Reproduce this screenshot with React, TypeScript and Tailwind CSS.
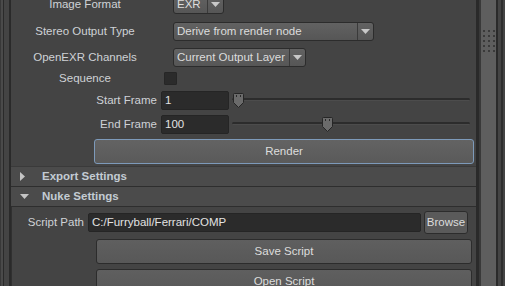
const font = { fontFamily: '"Liberation Sans", Arial, sans-serif' };

function Arrow() {
  return (
    <svg width="9" height="5" viewBox="0 0 9 5" className="block">
      <path d="M0 0 L9 0 L4.5 5 Z" fill="#c8c8c8" />
    </svg>
  );
}

function Dropdown({ value, width }: { value: string; width: string }) {
  return (
    <div
      className={`${width} h-[19px] flex items-stretch rounded-[3px] border border-[#2c2c2c] bg-gradient-to-b from-[#626262] to-[#565656] text-[#dcdcdc]`}
    >
      <div className="flex-1 flex items-center pl-[3px] text-[11.5px] whitespace-nowrap overflow-hidden">{value}</div>
      <div className="w-[16px] border-l border-[#3a3a3a] flex items-center justify-center">
        <Arrow />
      </div>
    </div>
  );
}

function Thumb({ left }: { left: number }) {
  return (
    <svg
      width="11"
      height="15"
      viewBox="0 0 11 15"
      className="absolute top-[-1px]"
      style={{ left }}
    >
      <path d="M1.5 0.5 H9.5 Q10.5 0.5 10.5 1.5 V9.5 L5.5 14.5 L0.5 9.5 V1.5 Q0.5 0.5 1.5 0.5 Z" fill="#6b6b6b" stroke="#262626" />
      <rect x="3" y="2" width="1" height="2" fill="#2a2a2a" />
      <rect x="7" y="2" width="1" height="2" fill="#2a2a2a" />
    </svg>
  );
}

function FrameRow({ label, value, thumb }: { label: string; value: string; thumb: number }) {
  return (
    <div className="flex items-center h-[19px] shrink-0">
      <div className="w-[146px] text-right text-[11.5px] text-[#cfd2d6]">{label}</div>
      <div className="ml-[4px] w-[68px] h-[19px] rounded-[2px] bg-[#2b2b2b] border border-[#252525] flex items-center pl-[3px] text-[11.5px] text-[#e2e2e2]">
        {value}
      </div>
      <div className="relative ml-[3px] w-[238px] h-[13px]">
        <div className="absolute left-0 right-0 top-[4px] h-[3px] rounded-full bg-[#2c2c2c] border-b border-[#4c4c4c]" />
        <Thumb left={thumb} />
      </div>
    </div>
  );
}

function Header({ title, open }: { title: string; open?: boolean }) {
  return (
    <div className="h-[20px] shrink-0 flex items-center bg-[#4b4b4b] border-b border-[#2e2e2e]">
      <div className="w-[31px] pl-[9px] flex items-center">
        {open ? (
          <svg width="9" height="5" viewBox="0 0 9 5"><path d="M0 0 L9 0 L4.5 5 Z" fill="#c4c4c4" /></svg>
        ) : (
          <svg width="5" height="9" viewBox="0 0 5 9"><path d="M0 0 L5 4.5 L0 9 Z" fill="#c4c4c4" /></svg>
        )}
      </div>
      <span className="text-[11.5px] font-bold text-[#c3cbd3]">{title}</span>
    </div>
  );
}

export default function App() {
  return (
    <div className="w-[505px] h-[286px] overflow-hidden flex bg-[#444444]" style={font}>
      {/* left frame */}
      <div className="flex shrink-0">
        <div className="w-[1px] bg-[#383838]" />
        <div className="w-[2px] bg-[#4a4a4a]" />
        <div className="w-[1px] bg-[#2a2a2a]" />
        <div className="w-[5px] bg-[#444444]" />
        <div className="w-[2px] bg-[#2a2a2a]" />
      </div>

      {/* main panel */}
      <div className="w-[465px] shrink-0 flex flex-col">
        <div className="flex items-center h-[19px] mt-[-5px] shrink-0">
          <div className="w-[148px] text-center text-[11.5px] text-[#cfd2d6]">Image Format</div>
          <div className="ml-[14px]">
            <Dropdown value="EXR" width="w-[51px]" />
          </div>
        </div>

        <div className="flex items-center h-[19px] mt-[8px] shrink-0">
          <div className="w-[148px] text-center text-[11.5px] text-[#cfd2d6]">Stereo Output Type</div>
          <div className="ml-[14px]">
            <Dropdown value="Derive from render node" width="w-[201px]" />
          </div>
        </div>

        <div className="flex items-center h-[19px] mt-[7px] shrink-0">
          <div className="w-[148px] text-center text-[11.5px] text-[#cfd2d6]">OpenEXR Channels</div>
          <div className="ml-[14px]">
            <Dropdown value="Current Output Layer" width="w-[133px]" />
          </div>
        </div>

        <div className="flex items-center h-[15px] mt-[4px] shrink-0">
          <div className="w-[148px] text-center text-[11.5px] text-[#cfd2d6]">Sequence</div>
          <div className="ml-[5px] w-[13px] h-[13px] bg-[#2b2b2b] border border-[#262626] rounded-[1px]" />
        </div>

        <div className="mt-[5px] shrink-0">
          <FrameRow label="Start Frame" value="1" thumb={1} />
        </div>
        <div className="mt-[5px] shrink-0">
          <FrameRow label="End Frame" value="100" thumb={90} />
        </div>

        <div className="ml-[83px] mt-[5px] shrink-0 w-[380px] h-[25px] rounded-[3px] border border-[#7d9aba] bg-gradient-to-b from-[#636363] to-[#5a5a5a] flex items-center justify-center text-[11.5px] text-[#dddddd]">
          Render
        </div>

        <div className="h-[3px] shrink-0 border-b border-[#3a3a3a]" />

        <Header title="Export Settings" />
        <Header title="Nuke Settings" open />

        <div className="flex-1 border-l border-[#303030] flex flex-col">
          <div className="flex items-center h-[23px] mt-[4px] shrink-0">
            <div className="w-[72px] text-right text-[11.5px] text-[#cfd2d6]">Script Path</div>
            <div className="ml-[4px] w-[333px] h-[19px] rounded-[2px] bg-[#2b2b2b] border border-[#252525] flex items-center pl-[3px] text-[11.5px] text-[#e2e2e2]">
              C:/Furryball/Ferrari/COMP
            </div>
            <div className="ml-[3px] w-[44px] h-[23px] rounded-[3px] border border-[#2c2c2c] bg-[#5a5a5a] flex items-center justify-center text-[11.5px] text-[#dddddd]">
              Browse
            </div>
          </div>

          <div className="ml-[84px] mt-[5px] shrink-0 w-[376px] h-[25px] rounded-[3px] border border-[#2c2c2c] bg-gradient-to-b from-[#5f5f5f] to-[#585858] flex items-center justify-center text-[11.5px] text-[#dddddd]">
            Save Script
          </div>
          <div className="ml-[84px] mt-[5px] shrink-0 w-[376px] h-[25px] rounded-[3px] border border-[#2c2c2c] bg-gradient-to-b from-[#5f5f5f] to-[#585858] flex items-center justify-center text-[11.5px] text-[#dddddd]">
            Open Script
          </div>
        </div>
      </div>

      {/* right frame / scrollbar */}
      <div className="flex shrink-0 flex-1">
        <div className="w-[3px] bg-[#2a2a2a]" />
        <div className="w-[2px] bg-[#393939]" />
        <div className="relative w-[15px] bg-[#5e5e5e]">
          <div className="absolute left-[2px] top-[30px] grid grid-cols-3 gap-x-[3px] gap-y-[3px]">
            {Array.from({ length: 15 }).map((_, i) => (
              <div key={i} className="w-[2px] h-[2px] bg-[#3a3a3a]" />
            ))}
          </div>
        </div>
        <div className="w-[2px] bg-[#2a2a2a]" />
        <div className="w-[3px] bg-[#444444]" />
        <div className="w-[2px] bg-[#2e2e2e]" />
        <div className="flex-1 bg-[#444444]" />
      </div>
    </div>
  );
}
